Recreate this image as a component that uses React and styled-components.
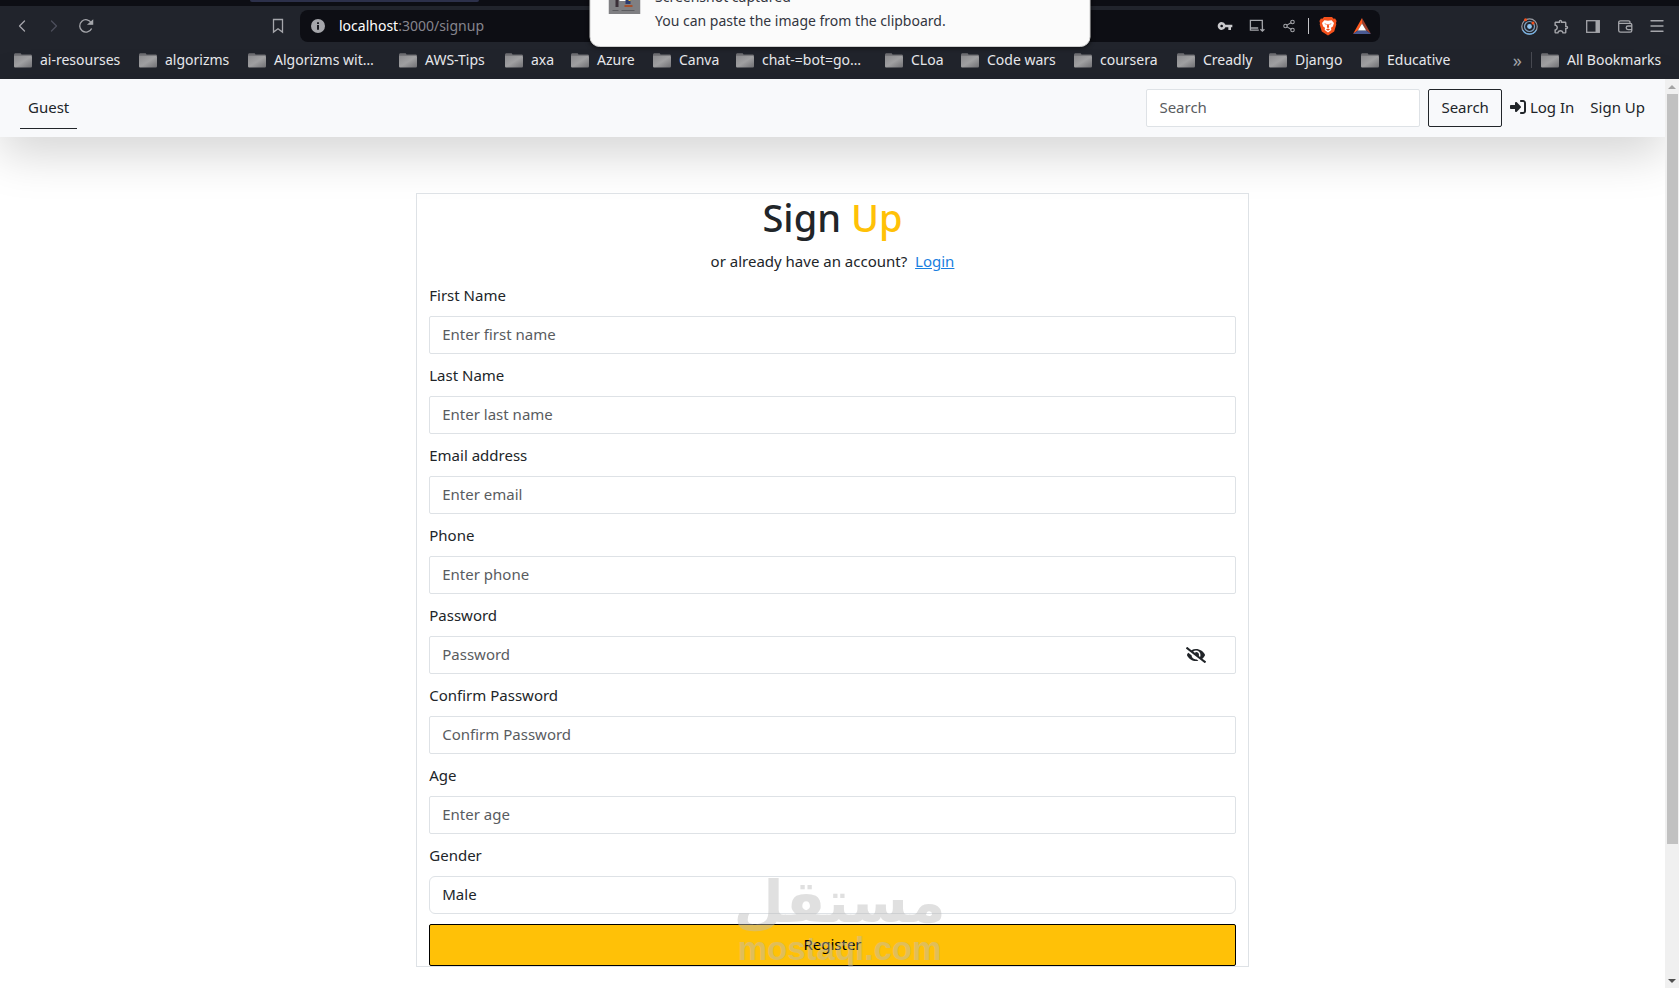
import React, { useState } from "react";
import styled, { createGlobalStyle } from "styled-components";
import { FaEyeSlash, FaEye } from "react-icons/fa";
import { FaRightToBracket } from "react-icons/fa6";
import { MdVpnKey, MdOutlineExtension } from "react-icons/md";
import { ChevronLeft, ChevronRight, Share2, Menu } from "lucide-react";

const GlobalStyle = createGlobalStyle`
  *, *::before, *::after { box-sizing: border-box; }
  body {
    margin: 0;
    background: #fff;
    color: #212529;
    font: 400 15px/22px "Noto Sans", "Open Sans", sans-serif;
  }
  button, input, select { font: inherit; color: inherit; margin: 0; }
`;

const Shell = styled.div`
  position: relative;
  display: flex;
  flex-direction: column;
  min-height: 100vh;
  overflow: hidden;
`;

/* Browser frame */
const Chrome = styled.header`
  background: #21242c;
  color: #e9eaee;
  font-size: 14px;
`;

const TabStrip = styled.div`
  height: 6px;
  padding-left: 250px;
  background: #0d0e14;
`;

const ActiveTab = styled.div`
  width: 229px;
  height: 2px;
  border-radius: 0 0 4px 4px;
  background: #2c304a;
`;

const Toolbar = styled.div`
  display: grid;
  grid-template-columns: 300px 1fr 299px;
  align-items: center;
  height: 40px;
`;

const ToolGroup = styled.div`
  display: flex;
  align-items: center;
  padding: 0 6px;
  justify-content: ${(p) => (p.$end ? "flex-end" : "flex-start")};
`;

const ToolButton = styled.button`
  display: grid;
  place-items: center;
  width: 32px;
  height: 32px;
  padding: 0;
  border: 0;
  background: none;
  color: ${(p) => (p.$dim ? "#4c4f5c" : "#a5a6ab")};
  margin-left: ${(p) => (p.$push ? "auto" : "0")};
`;

const AddressBar = styled.div`
  display: flex;
  align-items: center;
  height: 32px;
  padding: 0 2px 0 11px;
  border-radius: 8px;
  background: #0d0e14;
  > :last-child { margin-left: 2px; }
`;

const Address = styled.div`
  flex: 1;
  margin-left: 14px;
  color: #85858d;
  b { font-weight: 400; color: #fff; }
`;

const Divider = styled.span`
  width: 1px;
  height: 16px;
  margin: 0 ${(p) => (p.$wide ? 9 : 3)}px;
  background: ${(p) => (p.$wide ? "#484a52" : "#c4c4c8")};
`;

const BookmarkBar = styled.nav`
  display: flex;
  align-items: center;
  height: 33px;
  padding: 0 13px 5px 14px;
  overflow: hidden;
`;

const Bookmark = styled.a`
  display: flex;
  flex: 0 0 ${(p) => p.$width}px;
  align-items: center;
  gap: 8px;
  color: inherit;
  text-decoration: none;
  white-space: nowrap;
`;

const More = styled.button`
  margin-left: auto;
  padding: 0;
  border: 0;
  background: none;
  color: #a5a6ab;
  font-size: 18px;
`;

const Toast = styled.aside`
  position: absolute;
  z-index: 5;
  top: -31px;
  left: 50%;
  transform: translateX(-50%);
  display: flex;
  gap: 15px;
  width: 501px;
  padding: 15px 18px 13px;
  border: 1px solid #cfcfcf;
  border-radius: 10px;
  background: #fbfbfb;
  color: #33363f;
  font-size: 14px;
  line-height: 24px;
  box-shadow: 0 1px 4px rgba(0, 0, 0, 0.6);
`;

const ToastText = styled.p`
  margin: 0;
`;

/* Page */
const Viewport = styled.div`
  display: flex;
  flex: 1;
`;

const Content = styled.div`
  flex: 1;
`;

const Navbar = styled.nav`
  display: flex;
  align-items: center;
  justify-content: space-between;
  height: 58px;
  padding: 0 20px;
  background: #f8f9fb;
  box-shadow: 0 16px 48px rgba(0, 0, 0, 0.175);
`;

const NavGroup = styled.form`
  display: flex;
  align-items: center;
`;

const NavLink = styled.a`
  display: flex;
  align-items: center;
  gap: 4px;
  padding: 8px ${(p) => (p.$last ? 0 : 8)}px 10px ${(p) => (p.$flush ? 0 : 8)}px;
  border-bottom: ${(p) => (p.$active ? "1px solid #212529" : "0")};
  color: #212529;
  text-decoration: none;
`;

const Control = styled.input`
  display: block;
  width: 100%;
  height: 38px;
  padding: 6px 12px 8px;
  border: 1px solid #dee2e6;
  border-radius: 2px;
  background: #fff;
  outline: 0;
  &::placeholder { color: #595c5f; opacity: 1; }
`;

const SearchBox = styled(Control)`
  width: 274px;
  margin-right: 8px;
`;

const SearchButton = styled.button`
  height: 38px;
  margin-right: 8px;
  padding: 6px 12px 8px;
  border: 1px solid #212529;
  border-radius: 2px;
  background: none;
`;

const Card = styled.form`
  display: flex;
  flex-direction: column;
  gap: 10px;
  width: 50%;
  margin: 56px auto 0;
  padding: 0 12px;
  border: 1px solid #dee2e6;
`;

const Heading = styled.div`
  padding-bottom: 2px;
  text-align: center;
`;

const Title = styled.h1`
  margin: 0 0 10px;
  font-size: 38px;
  font-weight: 500;
  line-height: 46px;
  span { color: #ffc107; }
`;

const Prompt = styled.p`
  margin: 0;
  a { margin-left: 4px; color: #1a7fe0; }
`;

const Field = styled.div`
  position: relative;
`;

const Label = styled.label`
  display: block;
  margin-bottom: 10px;
`;

const Select = styled.select`
  display: block;
  width: 100%;
  height: 38px;
  padding: 6px 12px 8px;
  border: 1px solid #dee2e6;
  border-radius: 6px;
  background: #fff;
  appearance: none;
`;

const Reveal = styled.button`
  position: absolute;
  right: 30px;
  bottom: 9px;
  display: flex;
  padding: 0;
  border: 0;
  background: none;
`;

const Register = styled.button`
  height: 42px;
  padding: 0 12px 2px;
  border: 1px solid #000;
  border-radius: 2px;
  background: #ffc107;
  color: #000;
`;

const ScrollTrack = styled.div`
  display: flex;
  flex-direction: column;
  align-items: center;
  width: 14px;
  background: #f0f0f0;
`;

const ScrollArrow = styled.svg`
  width: 14px;
  height: 15px;
  fill: ${(p) => (p.$off ? "#a3a3a3" : "#505050")};
`;

const ScrollThumb = styled.div`
  flex: 750;
  width: 11px;
  background: #c1c1c1;
`;

const ScrollRest = styled.div`
  flex: 129;
`;

const Watermark = styled.div`
  position: absolute;
  bottom: 20px;
  left: 50%;
  transform: translateX(-50%);
  display: flex;
  flex-direction: column;
  align-items: center;
  opacity: 0.45;
  color: #bcbcbc;
  font-weight: 700;
  white-space: nowrap;
  pointer-events: none;
`;

const WatermarkArabic = styled.span`
  font-family: "DejaVu Sans", sans-serif;
  font-size: 58px;
  line-height: 56px;
`;

const WatermarkLatin = styled.span`
  font-family: "Liberation Sans", sans-serif;
  font-size: 33px;
  line-height: 38px;
`;

/* Icons */
const line = { fill: "none", stroke: "currentColor", strokeWidth: 1.3 };

const Reload = () => (
  <svg width="16" height="16" viewBox="0 0 16 16" {...line}>
    <path d="M13.6 10.4A6.2 6.2 0 1 1 13.4 5" />
    <path d="M10.6 6.2h4V2.6z" fill="currentColor" />
  </svg>
);
const BookmarkFlag = () => (
  <svg width="12" height="16" viewBox="0 0 12 16" {...line}>
    <path d="M1.5 1.5h9v12.6L6 10.8l-4.5 3.3z" />
  </svg>
);
const Info = () => (
  <svg width="14" height="14" viewBox="0 0 14 14">
    <circle cx="7" cy="7" r="7" fill="#a5a6ab" />
    <path d="M6.1 3.2h1.8V5H6.1zM6.1 6h1.8v4.8H6.1z" fill="#0d0e14" />
  </svg>
);
const Install = () => (
  <svg width="16" height="14" viewBox="0 0 16 14" {...line}>
    <path d="M13.300 6.500V1.400H1.400v9.800h8.400M1.400 9h7.800M13.400 6.400v5.600M11.400 10.200l2 2 2-2" />
  </svg>
);
const Shield = () => (
  <svg width="18" height="20" viewBox="0 0 18 20">
    <path d="M5 1h8l1.6 1.7 1.5-.2L17.6 5l-.6 2 .3 1.4-2.1 7.2L9 19.6l-6.2-4L.7 8.4 1 7 .4 5l1.5-2.5 1.500.2z" fill="#f4511c" />
    <path d="M5.4 4.2L9 4.700l3.600-.5 2.400 2.700-1.200 3.700-1.800 1.200.3 2.200L9 16.600 5.700 14l.3-2.200-1.800-1.200L3 6.900z" fill="#fff" />
    <path d="M5.200 7.300l2.500.6-.4 1zM12.800 7.300l-2.500.6.4 1zM8.200 8.300h1.600l.3 3L9 12.300l-1.100-1zM6.900 13.400L9 12.500l2.100.9L9 14.800z" fill="#f4511c" />
  </svg>
);
const Triangle = () => (
  <svg width="18" height="16" viewBox="0 0 18 16">
    <path d="M9 0v5.400L4.800 12.600 0 16z" fill="#ff5a1f" />
    <path d="M9 0l9 16-4.800-3.400L9 5.400z" fill="#a0402c" />
    <path d="M0 16l4.800-3.400h8.400L18 16z" fill="#4a5a93" />
    <path d="M9 5.400l4.200 7.200H4.800z" fill="#fff" />
  </svg>
);
const Orbit = () => (
  <svg width="17" height="17" viewBox="0 0 17 17" fill="none">
    <circle cx="8.500" cy="8.500" r="7.700" stroke="#9a9ca3" strokeWidth="1.200" />
    <path d="M1.800 12.300a7.700 7.700 0 0 0 13.400 0" stroke="#6fb0e6" strokeWidth="1.200" />
    <circle cx="8.500" cy="8.500" r="5" stroke="#7f9fbd" strokeWidth="1.200" />
    <circle cx="8.500" cy="8.500" r="2.400" fill="#8ec3ee" />
    <circle cx="4.500" cy="1.800" r="1.500" fill="#f4511c" />
    <circle cx="12" cy="5" r="1.500" fill="#f4511c" />
  </svg>
);
const SidePanel = () => (
  <svg width="14" height="13" viewBox="0 0 14 13">
    <rect x=".7" y=".7" width="12.600" height="11.600" {...line} />
    <path d="M9.500 1H13v11H9.500z" fill="currentColor" />
  </svg>
);
const WalletIcon = () => (
  <svg width="15" height="13" viewBox="0 0 15 13" {...line}>
    <path d="M12 3.500V2.300c0-.9-.5-1.500-1.500-1.500h-8C1.400.8.7 1.500.7 2.500v8c0 1 .7 1.700 1.800 1.700h9.700c1 0 1.600-.6 1.600-1.600V5c0-1-.6-1.600-1.600-1.600H1M13.800 6H10a1.800 1.800 0 0 0 0 3.600h3.800" />
  </svg>
);
const Folder = () => (
  <svg width="18" height="15" viewBox="0 0 18 15">
    <defs>
      <linearGradient id="folder" x1="0" y1="0" x2="1" y2="1">
        <stop offset="0" stopColor="#8c8c8f" />
        <stop offset="0.500" stopColor="#a2a2a4" />
        <stop offset="1" stopColor="#727276" />
      </linearGradient>
    </defs>
    <path d="M0 2C0 .8.6.3 1.500.3H6c.8 0 1.200.4 1.500 1.200h9c1 0 1.500.5 1.500 1.500H0z" fill="#6d6d71" />
    <path d="M0 2.800h16.500c1 0 1.500.5 1.500 1.400v8.900c0 1-.5 1.500-1.500 1.500h-15C.5 14.600 0 14.100 0 13.100z" fill="url(#folder)" />
  </svg>
);
const Thumbnail = () => (
  <svg width="32" height="29" viewBox="0 0 32 29">
    <path d="M0 0h32v29H0z" fill="#7f7f82" />
    <path d="M7 10h3v12H7z" fill="#3a3038" />
    <path d="M11 10h8v6h-8z" fill="#fff" />
    <path d="M17 12h5v7h-5z" fill="#2d3c70" />
    <path d="M20 12h2v4h-2z" fill="#e8c22e" />
    <path d="M16 20h8v2h-8z" fill="#a5502c" />
    <path d="M4 25h6v1H4zM13 25h13v1H13z" fill="#5c5c60" />
  </svg>
);

const bookmarks = [
  ["ai-resourses", 125], ["algorizms", 109], ["Algorizms wit…", 151], ["AWS-Tips", 106],
  ["axa", 66], ["Azure", 82], ["Canva", 83], ["chat-=bot=go…", 149], ["CLoa", 76],
  ["Code wars", 113], ["coursera", 103], ["Creadly", 92], ["Django", 92], ["Educative", 92],
];

const fields = [
  { id: "first", label: "First Name", hint: "Enter first name", type: "text" },
  { id: "last", label: "Last Name", hint: "Enter last name", type: "text" },
  { id: "email", label: "Email address", hint: "Enter email", type: "email" },
  { id: "phone", label: "Phone", hint: "Enter phone", type: "tel" },
  { id: "password", label: "Password", hint: "Password", type: "password" },
  { id: "confirm", label: "Confirm Password", hint: "Confirm Password", type: "password" },
  { id: "age", label: "Age", hint: "Enter age", type: "text" },
];

function BrowserChrome() {
  return (
    <Chrome>
      <TabStrip><ActiveTab /></TabStrip>
      <Toolbar>
        <ToolGroup>
          <ToolButton aria-label="Back"><ChevronLeft size={20} strokeWidth={1.5} /></ToolButton>
          <ToolButton aria-label="Forward" $dim><ChevronRight size={20} strokeWidth={1.5} /></ToolButton>
          <ToolButton aria-label="Reload"><Reload /></ToolButton>
          <ToolButton aria-label="Bookmark this page" $push><BookmarkFlag /></ToolButton>
        </ToolGroup>
        <AddressBar>
          <Info />
          <Address><b>localhost</b>:3000/signup</Address>
          <ToolButton aria-label="Passwords"><MdVpnKey size={16} color="#c9c9cc" /></ToolButton>
          <ToolButton aria-label="Install"><Install /></ToolButton>
          <ToolButton aria-label="Share"><Share2 size={14} strokeWidth={1.8} /></ToolButton>
          <Divider />
          <ToolButton aria-label="Shields"><Shield /></ToolButton>
          <ToolButton aria-label="Rewards"><Triangle /></ToolButton>
        </AddressBar>
        <ToolGroup $end>
          <ToolButton aria-label="Extension"><Orbit /></ToolButton>
          <ToolButton aria-label="Extensions"><MdOutlineExtension size={17} /></ToolButton>
          <ToolButton aria-label="Side panel"><SidePanel /></ToolButton>
          <ToolButton aria-label="Wallet"><WalletIcon /></ToolButton>
          <ToolButton aria-label="Menu"><Menu size={18} strokeWidth={1.8} /></ToolButton>
        </ToolGroup>
      </Toolbar>
      <BookmarkBar>
        {bookmarks.map(([name, width]) => (
          <Bookmark key={name} href="#" $width={width}><Folder />{name}</Bookmark>
        ))}
        <More aria-label="More bookmarks">»</More>
        <Divider $wide />
        <Bookmark href="#" $width={125}><Folder />All Bookmarks</Bookmark>
      </BookmarkBar>
    </Chrome>
  );
}

function SignUpForm() {
  const [shown, setShown] = useState(false);
  return (
    <Card onSubmit={(e) => e.preventDefault()}>
      <Heading>
        <Title>Sign <span>Up</span></Title>
        <Prompt>or already have an account? <a href="#login">Login</a></Prompt>
      </Heading>
      {fields.map((f) => (
        <Field key={f.id}>
          <Label htmlFor={f.id}>{f.label}</Label>
          <Control
            id={f.id}
            type={f.id === "password" && shown ? "text" : f.type}
            placeholder={f.hint}
          />
          {f.id === "password" && (
            <Reveal type="button" aria-label="Show password" onClick={() => setShown(!shown)}>
              {shown ? <FaEye size={20} /> : <FaEyeSlash size={20} />}
            </Reveal>
          )}
        </Field>
      ))}
      <Field>
        <Label htmlFor="gender">Gender</Label>
        <Select id="gender"><option>Male</option><option>Female</option></Select>
      </Field>
      <Register>Register</Register>
    </Card>
  );
}

export default function App() {
  return (
    <Shell>
      <GlobalStyle />
      <BrowserChrome />
      <Toast>
        <Thumbnail />
        <div>
          <ToastText>Screenshot captured</ToastText>
          <ToastText>You can paste the image from the clipboard.</ToastText>
        </div>
      </Toast>
      <Viewport>
        <Content>
          <Navbar>
            <NavLink href="#" $active>Guest</NavLink>
            <NavGroup onSubmit={(e) => e.preventDefault()}>
              <SearchBox type="search" placeholder="Search" aria-label="Search" />
              <SearchButton>Search</SearchButton>
              <NavLink href="#login" $flush><FaRightToBracket size={16} />Log In</NavLink>
              <NavLink href="#signup" $last>Sign Up</NavLink>
            </NavGroup>
          </Navbar>
          <SignUpForm />
        </Content>
        <ScrollTrack aria-hidden="true">
          <ScrollArrow $off viewBox="0 0 14 15"><path d="M7 6l4 4H3z" /></ScrollArrow>
          <ScrollThumb />
          <ScrollRest />
          <ScrollArrow viewBox="0 0 14 15"><path d="M3 6h8l-4 4z" /></ScrollArrow>
        </ScrollTrack>
      </Viewport>
      <Watermark aria-hidden="true">
        <WatermarkArabic lang="ar" dir="rtl">مستقل</WatermarkArabic>
        <WatermarkLatin>mostaql.com</WatermarkLatin>
      </Watermark>
    </Shell>
  );
}
